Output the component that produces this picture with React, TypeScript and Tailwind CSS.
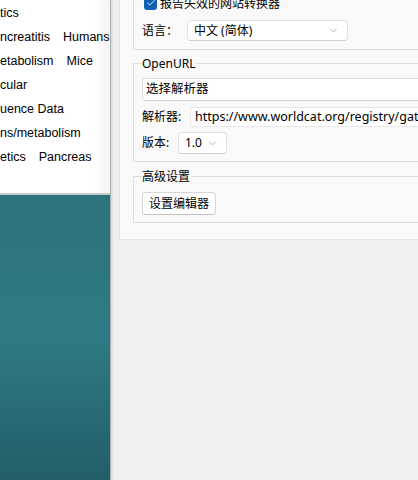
import React from 'react'
import { ChevronDown, Check } from 'lucide-react'

const font = { fontFamily: '"Noto Sans", "Noto Sans CJK SC", sans-serif' }
const leftFont = { fontFamily: '"Liberation Sans", "Noto Sans", sans-serif' }

const tagLines: string[][] = [
  ['tics'],
  ['ncreatitis', 'Humans'],
  ['etabolism', 'Mice'],
  ['cular'],
  ['uence Data'],
  ['ns/metabolism'],
  ['etics', 'Pancreas'],
]

const Select: React.FC<{ value: string; className?: string }> = ({ value, className }) => (
  <div className={`flex items-center justify-between bg-white border border-[#e1e1e1] border-b-[#cfcfcf] rounded-[4px] pl-[6px] pr-[8px] ${className ?? ''}`}>
    <span>{value}</span>
    <ChevronDown size={11} strokeWidth={1.5} className="text-[#8a8a8a]" />
  </div>
)

const GroupBox: React.FC<{ title?: string; className?: string; children: React.ReactNode }> = ({ title, className, children }) => (
  <div className={`relative border border-r-0 border-[#dedede] pl-[8px] ${className ?? ''}`}>
    {title && (
      <span className="absolute -top-[8px] left-[8px] bg-[#f9f9f9] leading-[16px] pr-[1px]">{title}</span>
    )}
    {children}
  </div>
)

export default function App() {
  return (
    <div className="flex w-[418px] h-[480px] overflow-hidden text-[12px] text-black" style={font}>
      <div className="w-[111px] shrink-0 flex flex-col border-r border-[#a9b0b1] shadow-[1px_0_3px_rgba(0,0,0,0.12)] z-10">
        <div className="h-[195px] bg-white border-b-2 border-[#c9c9c9] bg-gradient-to-r from-white from-85% to-[#f4f4f4] flex flex-col pt-[1px]" style={leftFont}>
          {tagLines.map((line, i) => (
            <div key={i} className="h-[24px] flex items-center gap-[13px] text-[12.5px] whitespace-nowrap">
              {line.map((t) => (
                <span key={t}>{t}</span>
              ))}
            </div>
          ))}
        </div>
        <div className="flex-1 bg-gradient-to-b from-[#2d737c] via-[#2e7a84] to-[#235e69]" />
      </div>

      <div className="flex-1 bg-[#f0f0f0] pl-[8px]">
        <div className="h-[240px] bg-[#f9f9f9] border-l border-b border-[#e4e4e4] pl-[13px] flex flex-col">
          <GroupBox className="border-t-0 h-[50px] flex flex-col">
            <div className="flex items-center gap-[3px] h-[11px] -mt-[1px] ml-[2px]">
              <div className="w-[13px] h-[13px] rounded-[3px] bg-[#0f5fb3] flex items-center justify-center -mt-[3px]">
                <Check size={10} strokeWidth={2} className="text-white" />
              </div>
              <span className="leading-[12px] -mt-[1px]">报告失效的网站转换器</span>
            </div>
            <div className="flex items-center mt-[10px]">
              <span className="w-[45px]">语言：</span>
              <Select value="中文 (简体)" className="w-[161px] h-[21px]" />
            </div>
          </GroupBox>

          <GroupBox title="OpenURL" className="mt-[13px] h-[99px] pt-[14px]">
            <div className="h-[23px] bg-white border border-[#e1e1e1] border-b-[#cfcfcf] rounded-l-[4px] border-r-0 flex items-center pl-[3px] text-[12.5px]">
              选择解析器
            </div>
            <div className="flex items-center mt-[6px]">
              <span className="w-[48px]">解析器:</span>
              <div className="flex-1 h-[20px] bg-white border border-r-0 border-[#e8e8e8] rounded-l-[3px] flex items-center pl-[4px] whitespace-nowrap overflow-hidden text-[12.5px]">
                https://www.worldcat.org/registry/gateway
              </div>
            </div>
            <div className="flex items-center mt-[5px]">
              <span className="w-[36px]">版本:</span>
              <Select value="1.0" className="w-[49px] h-[22px] pl-[5px] pr-[5px]" />
            </div>
          </GroupBox>

          <GroupBox title="高级设置" className="mt-[14px] h-[47px] pt-[15px]">
            <button className="h-[23px] px-[6px] bg-white border border-[#d6d6d6] border-b-[#c2c2c2] rounded-[4px] leading-none">
              设置编辑器
            </button>
          </GroupBox>
        </div>
      </div>
    </div>
  )
}
